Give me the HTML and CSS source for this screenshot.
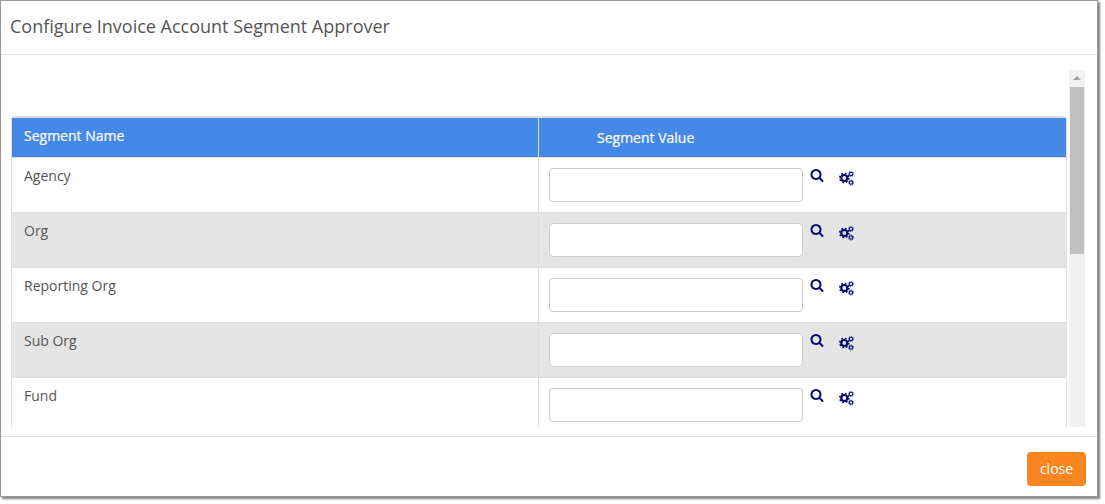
FILE: index.html
```html
<!DOCTYPE html>
<html lang="en">

<head>
    <meta charset="UTF-8">
    <title>Configure Invoice Account Segment Approver</title>
    <link rel="stylesheet" href="styles.css">
</head>

<body>
    <svg class="icon-defs" width="0" height="0">
        <symbol id="icon-search" viewBox="0 0 1792 1792">
            <path d="M1216 832q0-185-131.5-316.5t-316.5-131.5-316.5 131.5-131.5 316.5 131.5 316.5 316.5 131.5 316.5-131.5 131.5-316.5zm512 832q0 52-38 90t-90 38q-54 0-90-38l-343-342q-179 124-399 124-143 0-273.5-55.5t-225-150-150-225-55.5-273.5 55.5-273.5 150-225 225-150 273.5-55.5 273.5 55.5 225 150 150 225 55.5 273.5q0 220-124 399l343 343q37 37 37 90z" />
        </symbol>
        <symbol id="icon-cogs" viewBox="0 0 15 15">
            <g fill="none" stroke="currentColor">
                <circle cx="5.3" cy="7" r="3" stroke-width="2.2" />
                <circle cx="5.3" cy="7" r="4.5" stroke-width="1.7" stroke-dasharray="1.75 1.78" />
                <circle cx="12" cy="2.9" r="1.7" stroke-width="1.1" />
                <circle cx="12" cy="2.9" r="2.6" stroke-width=".8" stroke-dasharray="1 1.04" />
                <circle cx="12" cy="11.6" r="1.7" stroke-width="1.1" />
                <circle cx="12" cy="11.6" r="2.6" stroke-width=".8" stroke-dasharray="1 1.04" />
            </g>
        </symbol>
    </svg>

    <div class="modal">
        <header class="modal-header">
            <h4 class="modal-title">Configure Invoice Account Segment Approver</h4>
        </header>

        <div class="modal-body">
            <div class="table-pane">
                <table class="segment-table">
                    <thead>
                        <tr>
                            <th class="name-head">Segment Name</th>
                            <th class="value-head">Segment Value</th>
                        </tr>
                    </thead>
                    <tbody>
                        <tr>
                            <td>Agency</td>
                            <td>
                                <div class="value-cell">
                                    <input type="text" class="value-input">
                                    <a href="#" class="icon-link search-link"><svg class="icon-search"><use href="#icon-search" /></svg></a>
                                    <a href="#" class="icon-link"><svg class="icon-cogs"><use href="#icon-cogs" /></svg></a>
                                </div>
                            </td>
                        </tr>
                        <tr>
                            <td>Org</td>
                            <td>
                                <div class="value-cell">
                                    <input type="text" class="value-input">
                                    <a href="#" class="icon-link search-link"><svg class="icon-search"><use href="#icon-search" /></svg></a>
                                    <a href="#" class="icon-link"><svg class="icon-cogs"><use href="#icon-cogs" /></svg></a>
                                </div>
                            </td>
                        </tr>
                        <tr>
                            <td>Reporting Org</td>
                            <td>
                                <div class="value-cell">
                                    <input type="text" class="value-input">
                                    <a href="#" class="icon-link search-link"><svg class="icon-search"><use href="#icon-search" /></svg></a>
                                    <a href="#" class="icon-link"><svg class="icon-cogs"><use href="#icon-cogs" /></svg></a>
                                </div>
                            </td>
                        </tr>
                        <tr>
                            <td>Sub Org</td>
                            <td>
                                <div class="value-cell">
                                    <input type="text" class="value-input">
                                    <a href="#" class="icon-link search-link"><svg class="icon-search"><use href="#icon-search" /></svg></a>
                                    <a href="#" class="icon-link"><svg class="icon-cogs"><use href="#icon-cogs" /></svg></a>
                                </div>
                            </td>
                        </tr>
                        <tr>
                            <td>Fund</td>
                            <td>
                                <div class="value-cell">
                                    <input type="text" class="value-input">
                                    <a href="#" class="icon-link search-link"><svg class="icon-search"><use href="#icon-search" /></svg></a>
                                    <a href="#" class="icon-link"><svg class="icon-cogs"><use href="#icon-cogs" /></svg></a>
                                </div>
                            </td>
                        </tr>
                    </tbody>
                </table>
            </div>

            <div class="scrollbar">
                <div class="scroll-arrow"></div>
                <div class="scroll-thumb"></div>
            </div>
        </div>

        <footer class="modal-footer">
            <button class="btn-close">close</button>
        </footer>
    </div>
</body>

</html>
```

FILE: styles.css
```css
* {
    margin: 0;
    padding: 0;
    box-sizing: border-box;
}

html,
body {
    height: 100%;
}

body {
    font-family: 'Open Sans', sans-serif;
    background-color: #fff;
    color: #555;
    overflow: hidden;
}

.icon-defs {
    display: block;
    height: 0;
}

.modal {
    width: 1098px;
    height: 497px;
    background-color: #fff;
    border: 1px solid #999;
    box-shadow: 2px 2px 2px rgba(0, 0, 0, 0.5);
    display: flex;
    flex-direction: column;
}

.modal-header {
    height: 54px;
    padding: 14px 9px 0;
    border-bottom: 1px solid #e2e2e2;
}

.modal-title {
    font-size: 18px;
    font-weight: 400;
    line-height: 22px;
    color: #555;
}

.modal-body {
    height: 381px;
    padding: 15px 11px 0 10px;
    display: flex;
    gap: 2px;
}

.table-pane {
    width: 1056px;
    height: 357px;
    overflow: hidden;
    padding-top: 46px;
}

.segment-table {
    width: 100%;
    border-collapse: separate;
    border-spacing: 0;
    table-layout: fixed;
    font-size: 14px;
    border-top: 2px solid #ddd;
    border-left: 1px solid #ddd;
    border-right: 1px solid #ddd;
    border-radius: 4px 4px 0 0;
}

.segment-table th {
    height: 40px;
    background-color: #4589e8;
    color: #fff;
    font-weight: 400;
    -webkit-text-stroke: 0.2px #fff;
    text-align: left;
    border-bottom: 1px solid #ddd;
}

.name-head {
    width: 527px;
    padding: 0 12px 5px;
    border-right: 1px solid #ddd;
}

.value-head {
    padding: 0 12px 0 58px;
}

.segment-table td {
    height: 55px;
    vertical-align: top;
    padding: 9px 12px 0;
    line-height: 18px;
    border-bottom: 1px solid #ddd;
}

.segment-table td:first-child {
    border-right: 1px solid #ddd;
}

.segment-table td:last-child {
    padding: 10px 10px 0;
}

.segment-table tbody tr:nth-child(even) td {
    background-color: #e5e5e5;
}

.value-cell {
    display: flex;
    align-items: flex-start;
}

.value-input {
    width: 254px;
    height: 34px;
    border: 1px solid #ccc;
    border-radius: 4px;
    background-color: #fff;
}

.icon-link {
    color: #0b0b70;
    display: block;
    line-height: 0;
}

.search-link {
    margin: 0 15px 0 7px;
}

.icon-search {
    width: 14px;
    height: 14px;
    fill: currentColor;
}

.icon-cogs {
    width: 15px;
    height: 15px;
    margin-top: 3px;
}

.scrollbar {
    width: 16px;
    height: 357px;
    background-color: #f1f1f1;
    display: flex;
    flex-direction: column;
    align-items: center;
}

.scroll-arrow {
    height: 17px;
    width: 100%;
    flex-shrink: 0;
}

.scroll-arrow::after {
    content: '';
    display: block;
    width: 0;
    margin: 6px auto 0;
    border-left: 4px solid transparent;
    border-right: 4px solid transparent;
    border-bottom: 4px solid #a3a3a3;
}

.scroll-thumb {
    width: 14px;
    height: 167px;
    background-color: #c1c1c1;
}

.modal-footer {
    flex: 1;
    border-top: 1px solid #e2e2e2;
    padding: 15px 10px 0;
    display: flex;
    justify-content: flex-end;
    align-items: flex-start;
}

.btn-close {
    width: 59px;
    height: 34px;
    padding-bottom: 2px;
    margin-right: 1px;
    background-color: #fb8621;
    border: none;
    border-radius: 4px;
    color: #fff;
    font-family: inherit;
    font-size: 14px;
    cursor: pointer;
}
```
